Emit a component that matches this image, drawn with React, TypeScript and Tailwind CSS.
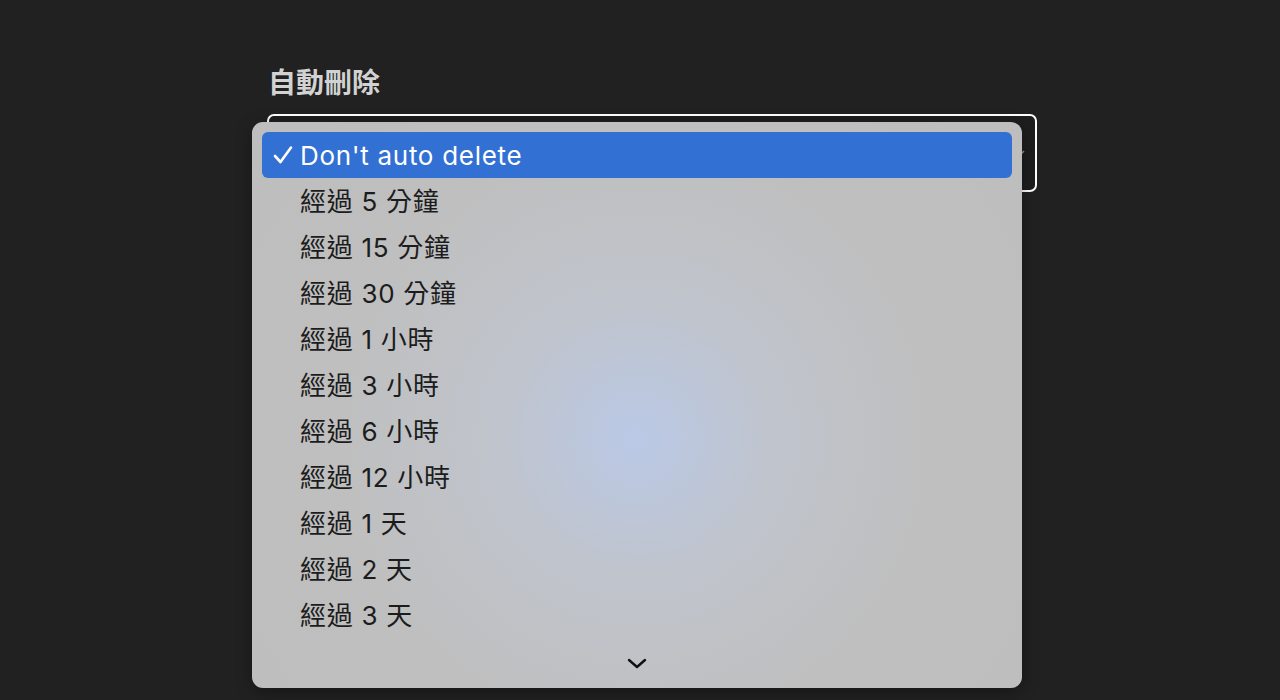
import React from "react";

const items = [
  "經過 5 分鐘",
  "經過 15 分鐘",
  "經過 30 分鐘",
  "經過 1 小時",
  "經過 3 小時",
  "經過 6 小時",
  "經過 12 小時",
  "經過 1 天",
  "經過 2 天",
  "經過 3 天",
];

export default function App() {
  return (
    <div
      className="w-[1280px] h-[700px] bg-[#212121] overflow-hidden"
      style={{ fontFamily: 'Inter, "Noto Sans CJK TC", sans-serif' }}
    >
      <div className="relative pl-[267px] pt-[64px] w-[1037px]">
        <div className="text-[28px] font-bold text-[#d2d2d2] leading-[38px] pl-[1px]">自動刪除</div>
        <div className="mt-[12px] h-[78px] border-2 border-white rounded-[7px] bg-[#1e1e1e] flex items-center justify-end pr-[6px]">
          <svg width="10" height="10" viewBox="0 0 10 10">
            <path d="M2 6 L5 3" stroke="#9a9a9a" strokeWidth="1.5" fill="none" />
          </svg>
        </div>
        <div
          className="absolute left-[252px] top-[122px] w-[770px] h-[566px] rounded-[11px] p-[10px] shadow-[0_4px_16px_rgba(0,0,0,0.35)]"
          style={{
            background:
              "radial-gradient(circle at 50% 56%, #bac9e6 0px, #c0c4cc 140px, #bfbfbf 300px, #bdbdbd 600px)",
          }}
        >
          <div className="h-[46px] rounded-[6px] bg-[#3370d4] flex items-center pl-[11px] text-white text-[26px] tracking-[0.7px]">
            <span className="w-[27px] flex items-center">
              <svg width="20" height="20" viewBox="0 0 20 20">
                <path d="M2 11 L7.5 17 L18 2.5" stroke="#fff" strokeWidth="2.6" fill="none" strokeLinecap="round" strokeLinejoin="round" />
              </svg>
            </span>
            <span>Don't auto delete</span>
          </div>
          {items.map((t) => (
            <div key={t} className="h-[46px] flex items-center pl-[38px] text-[26px] tracking-[0.7px] text-[#1c1c1c]">
              {t}
            </div>
          ))}
          <div className="h-[50px] flex items-center justify-center">
            <svg width="22" height="14" viewBox="0 0 22 14">
              <path d="M3 4 L11 11 L19 4" stroke="#111" strokeWidth="2.4" fill="none" strokeLinecap="round" strokeLinejoin="round" />
            </svg>
          </div>
        </div>
      </div>
    </div>
  );
}
